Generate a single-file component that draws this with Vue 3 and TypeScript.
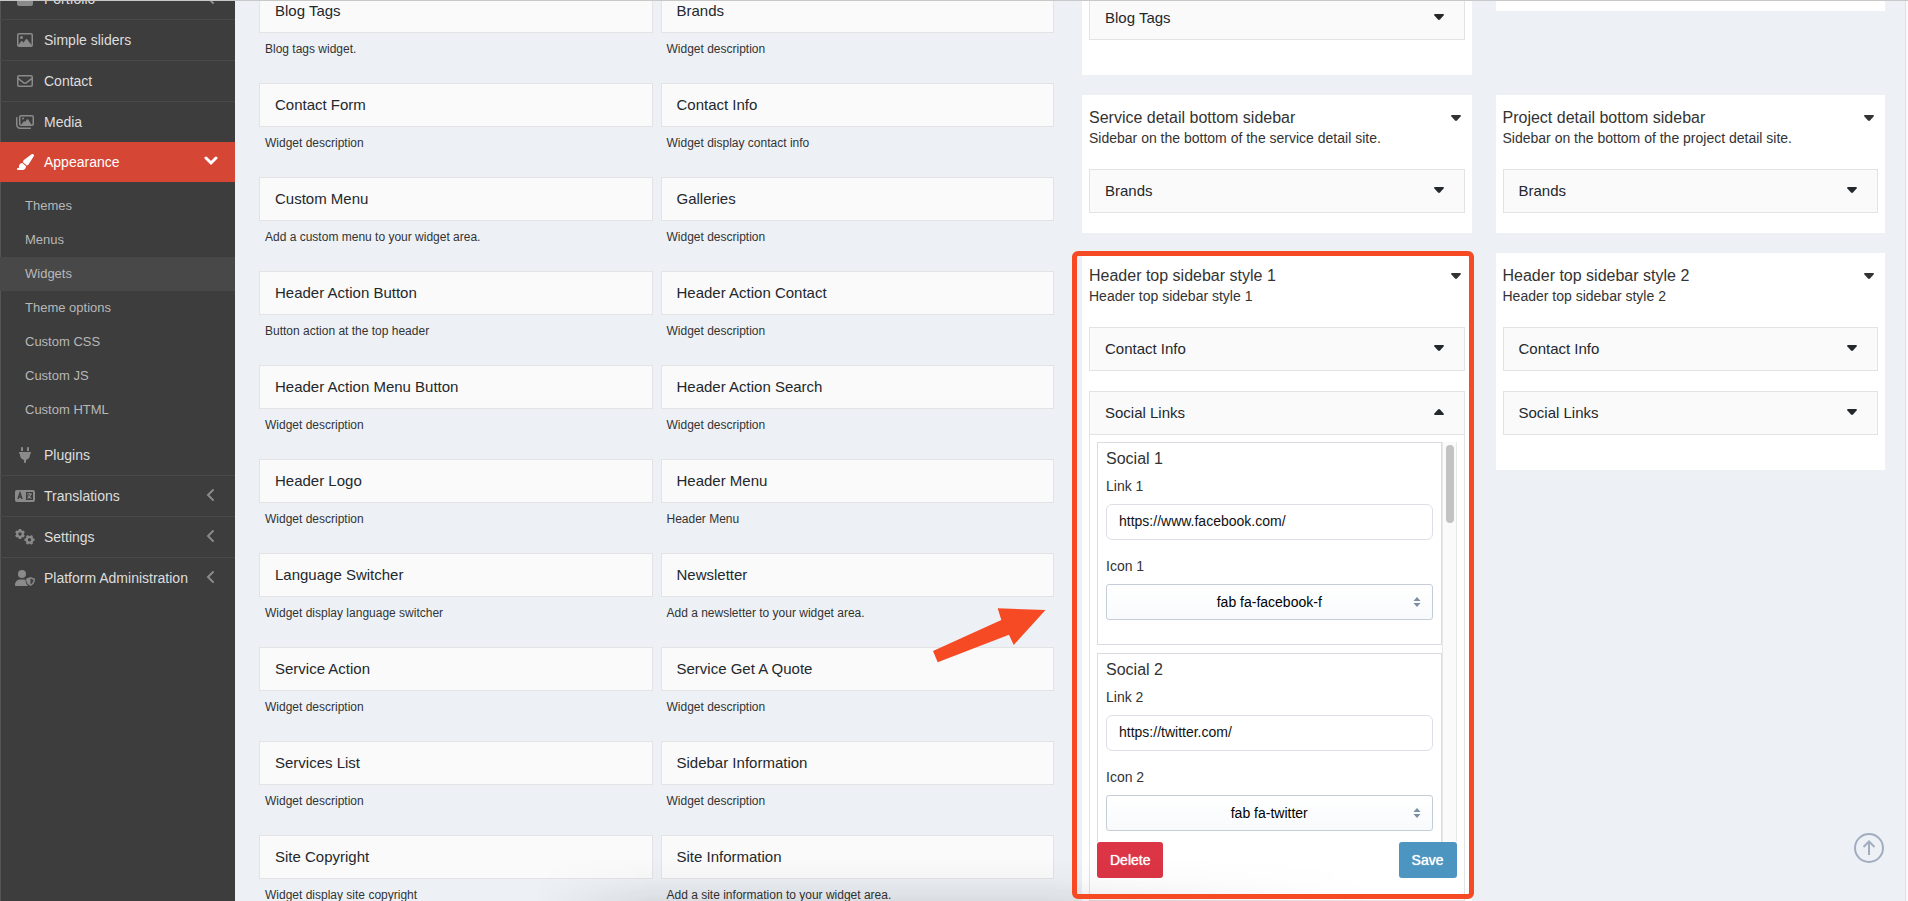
<script setup lang="ts">
import { ref } from 'vue'

interface Widget { name: string; desc: string }
interface MenuItem { label: string; icon: string; arrow?: boolean; plain?: boolean }
interface Social { id: number; link: string; icon: string }

const menuTop: MenuItem[] = [
  { label: 'Portfolio', icon: 'briefcase', arrow: true },
  { label: 'Simple sliders', icon: 'image' },
  { label: 'Contact', icon: 'envelope' },
  { label: 'Media', icon: 'images', plain: true },
]
const subMenu = ['Themes', 'Menus', 'Widgets', 'Theme options', 'Custom CSS', 'Custom JS', 'Custom HTML']
const menuBottom: MenuItem[] = [
  { label: 'Plugins', icon: 'plug' },
  { label: 'Translations', icon: 'language', arrow: true },
  { label: 'Settings', icon: 'gears', arrow: true },
  { label: 'Platform Administration', icon: 'shield', arrow: true, plain: true },
]

const d = 'Widget description'
const widgets: Widget[] = [
  { name: 'Blog Tags', desc: 'Blog tags widget.' },
  { name: 'Brands', desc: d },
  { name: 'Contact Form', desc: d },
  { name: 'Contact Info', desc: 'Widget display contact info' },
  { name: 'Custom Menu', desc: 'Add a custom menu to your widget area.' },
  { name: 'Galleries', desc: d },
  { name: 'Header Action Button', desc: 'Button action at the top header' },
  { name: 'Header Action Contact', desc: d },
  { name: 'Header Action Menu Button', desc: d },
  { name: 'Header Action Search', desc: d },
  { name: 'Header Logo', desc: d },
  { name: 'Header Menu', desc: 'Header Menu' },
  { name: 'Language Switcher', desc: 'Widget display language switcher' },
  { name: 'Newsletter', desc: 'Add a newsletter to your widget area.' },
  { name: 'Service Action', desc: d },
  { name: 'Service Get A Quote', desc: d },
  { name: 'Services List', desc: d },
  { name: 'Sidebar Information', desc: d },
  { name: 'Site Copyright', desc: 'Widget display site copyright' },
  { name: 'Site Information', desc: 'Add a site information to your widget area.' },
]

const socials = ref<Social[]>([
  { id: 1, link: 'https://www.facebook.com/', icon: 'fab fa-facebook-f' },
  { id: 2, link: 'https://twitter.com/', icon: 'fab fa-twitter' },
])
const iconChoices = ['fab fa-facebook-f', 'fab fa-twitter']
const open = ref(true)

const caret = 'M1 0h8q1.5.5.6 1.6L6 5.500q-1 .8-2 0L.4 1.600Q-.5.5 1 0z'

const shapes: Record<string, { box: string; w: number; path: string }> = {
  briefcase: { box: '0 0 512 512', w: 16, path: 'M64 96h96V64c0-18 14-32 32-32h128c18 0 32 14 32 32v32h96c35 0 64 29 64 64v256c0 35-29 64-64 64H64c-35 0-64-29-64-64V160c0-35 29-64 64-64z' },
  image: { box: '0 0 512 512', w: 16, path: 'M448 80c8.8 0 16 7.2 16 16V415.8l-5-6.5-136-176c-4.5-5.9-11.6-9.3-19-9.3s-14.4 3.4-19 9.3L202 340.7l-30.5-42.7C167 291.7 159.8 288 152 288s-15 3.7-19.5 10.1l-80 112L48 416.3l0-.3V96c0-8.8 7.2-16 16-16H448zM64 32C28.7 32 0 60.7 0 96V416c0 35.3 28.7 64 64 64H448c35.3 0 64-28.7 64-64V96c0-35.3-28.7-64-64-64H64zm80 192a48 48 0 1 0 0-96 48 48 0 1 0 0 96z' },
  envelope: { box: '0 0 512 512', w: 16, path: 'M64 112c-8.8 0-16 7.2-16 16v22.1L220.5 291.7c20.7 17 50.4 17 71.1 0L464 150.1V128c0-8.8-7.2-16-16-16H64zM48 212.2V384c0 8.8 7.2 16 16 16H448c8.8 0 16-7.2 16-16V212.2L322 328.8c-38.4 31.5-93.7 31.5-132 0L48 212.2zM0 128C0 92.7 28.7 64 64 64H448c35.3 0 64 28.7 64 64V384c0 35.3-28.7 64-64 64H64c-35.3 0-64-28.7-64-64V128z' },
  images: { box: '0 0 576 512', w: 18, path: 'M160 80H512c8.8 0 16 7.2 16 16V320c0 8.8-7.2 16-16 16H490.8L388.1 178.9c-4.4-6.8-12-10.9-20.1-10.9s-15.7 4.1-20.1 10.9l-52.2 79.8-12.4-16.9c-4.5-6.2-11.7-9.8-19.4-9.8s-14.8 3.6-19.4 9.8L175.6 336H160c-8.8 0-16-7.2-16-16V96c0-8.8 7.2-16 16-16zM96 96V320c0 35.3 28.7 64 64 64H512c35.3 0 64-28.7 64-64V96c0-35.3-28.7-64-64-64H160c-35.3 0-64 28.7-64 64zM48 120c0-13.3-10.7-24-24-24S0 106.7 0 120V344c0 75.1 60.9 136 136 136H456c13.3 0 24-10.7 24-24s-10.7-24-24-24H136c-48.6 0-88-39.4-88-88V120zm208 24a32 32 0 1 0 -64 0 32 32 0 1 0 64 0z' },
  brush: { box: '0 0 576 512', w: 18, path: 'M339.3 367.1c27.3-3.9 51.9-19.4 67.2-42.9L568.2 74.1c12.6-19.5 9.4-45.3-7.6-61.2S517.7-4.4 499.1 9.6L262.4 187.2c-24 18-38.2 46.1-38.4 76.1L339.3 367.1zm-19.6 25.4l-116-104.4C143.9 290.3 96 339.6 96 400c0 3.9 .2 7.8 .6 11.6C98.4 429.1 86.4 448 68.8 448H64c-17.7 0-32 14.3-32 32s14.3 32 32 32H208c61.9 0 112-50.1 112-112c0-2.5-.1-5-.2-7.5z' },
  plug: { box: '0 0 384 512', w: 12, path: 'M96 0C78.3 0 64 14.3 64 32v96h64V32c0-17.7-14.3-32-32-32zM288 0c-17.7 0-32 14.3-32 32v96h64V32c0-17.7-14.3-32-32-32zM32 160c-17.7 0-32 14.3-32 32s14.3 32 32 32v32c0 77.4 55 142 128 156.8V480c0 17.7 14.3 32 32 32s32-14.3 32-32V412.8C297 398 352 333.4 352 256V224c17.7 0 32-14.3 32-32s-14.3-32-32-32H32z' },
}
</script>

<template>
  <div class="screen">
    <nav class="sidebar" aria-label="Main menu">
      <div class="menu">
        <a v-for="m in menuTop" :key="m.label" href="#" class="row" :class="{ plain: m.plain }">
          <span class="ico"><svg :width="shapes[m.icon].w" height="16" :viewBox="shapes[m.icon].box" fill="currentColor"><path :d="shapes[m.icon].path" /></svg></span>
          <span class="label">{{ m.label }}</span>
          <svg v-if="m.arrow" class="arrow" width="9" height="14" viewBox="0 0 9 14"><path d="M7 2 2 7l5 5" fill="none" stroke="currentColor" stroke-width="2" stroke-linecap="round" /></svg>
        </a>
        <a href="#" class="row active">
          <span class="ico"><svg width="18" height="16" :viewBox="shapes.brush.box" fill="currentColor"><path :d="shapes.brush.path" /></svg></span>
          <span class="label">Appearance</span>
          <svg class="arrow" width="14" height="10" viewBox="0 0 14 10"><path d="M2 2l5 5 5-5" fill="none" stroke="currentColor" stroke-width="3" stroke-linecap="round" /></svg>
        </a>
        <div class="submenu">
          <a v-for="s in subMenu" :key="s" href="#" class="sub" :class="{ current: s === 'Widgets' }">{{ s }}</a>
        </div>
        <a v-for="m in menuBottom" :key="m.label" href="#" class="row" :class="{ plain: m.plain }">
          <span class="ico">
            <svg v-if="m.icon === 'language'" width="20" height="16" viewBox="0 0 20 16">
              <rect x="0" y="2" width="20" height="12" rx="2" fill="currentColor" />
              <path d="M11 4h7v8h-7z" fill="#3d3d3d" />
              <path d="M3 11 5 5l2 6M4 9h3" fill="none" stroke="#3d3d3d" stroke-width="1.4" />
              <path d="M12 6h5M14.5 5v1M16 6q-1 3-3.500 4.500M13 7.500q1 2 3.500 3" fill="none" stroke="currentColor" stroke-width="1.2" />
            </svg>
            <svg v-else-if="m.icon === 'gears'" width="20" height="16" viewBox="0 0 20 16" fill="none" stroke="currentColor">
              <circle cx="5" cy="5" r="2.8" stroke-width="2.2" />
              <path d="M5 0v2M5 8v2M.7 2.500l1.700 1M7.600 6.500l1.700 1M.7 7.500l1.700-1M7.600 3.500l1.700-1" stroke-width="2.4" />
              <circle cx="14.5" cy="10.8" r="2.8" stroke-width="2.2" />
              <path d="M9.5 10.8h2M17.5 10.8h2M12 6.500l1 1.700M16 13.400l1 1.700M17 6.500l-1 1.700M13 13.400l-1 1.700" stroke-width="2.4" />
            </svg>
            <svg v-else-if="m.icon === 'shield'" width="20" height="16" viewBox="0 0 20 16">
              <circle cx="7" cy="4" r="4" fill="currentColor" />
              <path d="M0 15c0-3.500 2.500-5.500 5.500-5.500h3c.7 0 1.400.1 2 .4.2 2.500 1.200 4.700 2.800 6.100H1c-.6 0-1-.4-1-1z" fill="currentColor" />
              <path d="M15.5 7 20 8.700c0 3.300-1.500 6-4.500 7.300-3-1.300-4.500-4-4.500-7.300z" fill="currentColor" />
              <path d="M15.5 8.600v5.800c1.900-1 2.900-2.600 3-4.700z" fill="#3d3d3d" />
            </svg>
            <svg v-else :width="shapes[m.icon].w" height="16" :viewBox="shapes[m.icon].box" fill="currentColor"><path :d="shapes[m.icon].path" /></svg>
          </span>
          <span class="label">{{ m.label }}</span>
          <svg v-if="m.arrow" class="arrow" width="9" height="14" viewBox="0 0 9 14"><path d="M7 2 2 7l5 5" fill="none" stroke="currentColor" stroke-width="2" stroke-linecap="round" /></svg>
        </a>
      </div>
    </nav>

    <main class="content">
      <div class="columns">
        <section class="available">
          <article v-for="w in widgets" :key="w.name">
            <h3 class="card">{{ w.name }}</h3>
            <p class="desc">{{ w.desc }}</p>
          </article>
        </section>

        <section class="areas">
          <div class="panel tall">
            <button class="item" type="button">Blog Tags<svg class="caret" viewBox="0 0 10 6"><path :d="caret" /></svg></button>
          </div>
          <div class="panel stub"></div>

          <div v-for="p in ['Service', 'Project']" :key="p" class="panel">
            <header class="head">
              <div>
                <h2>{{ p }} detail bottom sidebar</h2>
                <p>Sidebar on the bottom of the {{ p.toLowerCase() }} detail site.</p>
              </div>
              <button class="toggle" type="button" aria-label="Toggle area"><svg class="caret" viewBox="0 0 10 6"><path :d="caret" /></svg></button>
            </header>
            <button class="item" type="button">Brands<svg class="caret" viewBox="0 0 10 6"><path :d="caret" /></svg></button>
          </div>

          <div v-for="n in [1, 2]" :key="n" class="panel tall">
            <header class="head">
              <div>
                <h2>Header top sidebar style {{ n }}</h2>
                <p>Header top sidebar style {{ n }}</p>
              </div>
              <button class="toggle" type="button" aria-label="Toggle area"><svg class="caret" viewBox="0 0 10 6"><path :d="caret" /></svg></button>
            </header>
            <button class="item" type="button">Contact Info<svg class="caret" viewBox="0 0 10 6"><path :d="caret" /></svg></button>
            <button class="item" :class="{ opened: n === 1 && open }" type="button" @click="n === 1 && (open = !open)">Social Links<svg class="caret" viewBox="0 0 10 6"><path :d="caret" /></svg></button>
            <form v-if="n === 1 && open" class="editor" @submit.prevent>
              <div class="scroller">
                <div class="fields">
                  <fieldset v-for="s in socials" :key="s.id" class="social">
                    <h4>Social {{ s.id }}</h4>
                    <label :for="'link' + s.id">Link {{ s.id }}</label>
                    <input :id="'link' + s.id" v-model="s.link" type="text">
                    <label :for="'icon' + s.id">Icon {{ s.id }}</label>
                    <div class="pick">
                      <select :id="'icon' + s.id" v-model="s.icon">
                        <option v-for="c in iconChoices" :key="c">{{ c }}</option>
                      </select>
                      <svg class="updown" width="8" height="10" viewBox="0 0 8 10"><path d="M4 0l3.500 4h-7zM4 10 .5 6h7z" fill="#7c8ea3" /></svg>
                    </div>
                  </fieldset>
                </div>
                <div class="track"><div class="thumb"></div></div>
              </div>
              <div class="buttons">
                <button class="btn delete" type="button">Delete</button>
                <button class="btn save" type="submit">Save</button>
              </div>
            </form>
            <template v-if="n === 1">
              <div class="frame"></div>
              <svg class="pointer" width="113" height="55" viewBox="0 0 113 55"><path d="M0 43 68.300 12 64.700.3 112.500 2 80.700 37 76 26.700 4.700 54.300z" fill="#f64a24" /></svg>
            </template>
          </div>
        </section>
      </div>
      <div class="edge"></div>
    </main>

    <div class="shade"></div>
    <button class="to-top" type="button" aria-label="Back to top">
      <svg width="30" height="30" viewBox="0 0 30 30" fill="none" stroke="#a1adbf" stroke-width="2"><circle cx="15" cy="15" r="14" /><path d="M15 22V9M9.500 14 15 8.500l5.500 5.500" /></svg>
    </button>
  </div>
</template>

<style>
body { margin: 0; overflow: hidden; }
</style>

<style scoped>
.screen {
  position: relative;
  box-sizing: border-box;
  display: flex;
  height: 100vh;
  overflow: hidden;
  background: #edf1f6;
  color: #333;
  font: 14px/20px "Liberation Sans", Arial, Helvetica, sans-serif;
}
.screen::before {
  content: "";
  position: absolute;
  inset: 0 0 auto;
  height: 1px;
  background: #c8c8c8;
  z-index: 3;
}
.screen *, .screen *::before { box-sizing: border-box; }
h2, h3, h4, p { margin: 0; font-weight: 400; }
button, input, select { font: inherit; margin: 0; }

.sidebar { flex: 0 0 235px; background: #3d3d3d; overflow: hidden; box-shadow: inset 1px 0 #555; }
.menu { margin-top: -21px; }
.row {
  display: flex;
  align-items: center;
  height: 41px;
  padding: 0 20px 0 15px;
  border-bottom: 1px solid #494949;
  color: #8a8a8a;
  text-decoration: none;
}
.row.plain { height: 40px; border-bottom: 0; }
.row .label { flex: 1; margin-left: 9px; color: #ddd; }
.ico { display: flex; justify-content: center; width: 20px; }
.row svg { display: block; }
.row .arrow { margin-bottom: 3px; }
.row.active { height: 40px; border: 0; background: #d64635; color: #fff; padding-right: 17px; }
.row.active .label { color: #fff; }
.submenu { padding: 7px 0 8px; }
.sub {
  display: block;
  height: 34px;
  padding-left: 25px;
  font-size: 13px;
  line-height: 34px;
  color: #b8b8b8;
  text-decoration: none;
}
.sub.current { background: #484848; }

.content { flex: 1; display: flex; min-width: 0; overflow: hidden; }
.columns {
  flex: 1;
  display: grid;
  grid-template-columns: 795fr 803fr;
  align-items: start;
  gap: 28px;
  margin-top: -11px;
  padding: 0 20px 0 24px;
}
.edge { flex: 0 0 3px; background: #fafafa; border-left: 1px solid #e2e2e2; }
.available { display: grid; grid-template-columns: 1fr 1fr; column-gap: 8px; }
.card, .item {
  height: 44px;
  padding: 0 15px;
  border: 1px solid #e3e3e3;
  background: #fafafa;
  color: #23282d;
  font-size: 15px;
  line-height: 42px;
}
.desc { padding: 7px 6px 25px; font-size: 12px; line-height: 18px; }

.areas { display: grid; grid-template-columns: 1fr 1fr; align-items: start; gap: 20px 24px; }
.panel { position: relative; padding: 0 7px; background: #fff; }
.panel.tall { padding-bottom: 15px; }
.panel:first-child { padding-top: 7px; }
.panel.stub { height: 22px; }
.head { display: flex; justify-content: space-between; align-items: flex-start; height: 74px; padding: 13px 4px 0 0; }
.head h2 { font-size: 16px; line-height: 20px; }
.head p { font-size: 14px; line-height: 20px; }
.toggle { height: 20px; padding: 0; border: 0; background: none; color: #333; }
.caret { display: block; width: 10px; height: 6px; fill: currentColor; }
.item {
  display: flex;
  justify-content: space-between;
  align-items: center;
  width: 100%;
  margin-bottom: 20px;
  padding-right: 20px;
  text-align: left;
}
.item .caret { margin-bottom: 2px; }
.item.opened { margin-bottom: 0; }
.item.opened .caret { transform: rotate(180deg); }

.editor { padding: 7px 7px 22px; border: 1px solid #e3e3e3; border-top: 0; }
.scroller { display: flex; height: 400px; overflow: hidden; }
.fields { flex: 1; min-width: 0; }
.social { min-width: 0; margin: 0 0 8px; padding: 7px 8px 8px; border: 1px solid #d9dde3; }
.social h4 { margin-bottom: 8px; font-size: 16px; line-height: 18px; }
.social label { display: block; margin-bottom: 8px; }
.social input, .social select { display: block; width: 100%; height: 36px; margin-bottom: 16px; outline: 0; }
.social input { padding: 0 12px 2px; border: 1px solid #dcdfe8; border-radius: 6px; color: #111; background: #fff; }
.social select {
  appearance: none;
  padding: 0 12px;
  border: 1px solid #c4cdd8;
  border-radius: 3px;
  background: linear-gradient(#fff, #f8fafc);
  color: #000;
  text-align: center;
  text-align-last: center;
}
.pick { position: relative; }
.updown { position: absolute; top: 13px; right: 12px; }
.track { flex: 0 0 15px; padding: 3px 2px 0 3px; background: #fafafa; border: solid #e8e8e8; border-width: 0 1px; }
.thumb { width: 8px; height: 78px; border-radius: 4px; background: #c2c2c2; }
.buttons { display: flex; justify-content: space-between; }
.btn { height: 36px; padding: 0 13px; border: 0; border-radius: 3px; color: #fff; text-shadow: 0 0 1px #fff; }
.delete { background: #dc3545; }
.save { background: #4c95c1; }

.frame {
  position: absolute;
  top: -2px;
  left: -10px;
  right: -2px;
  height: 648px;
  border: 5px solid #f64a24;
  border-radius: 6px;
  pointer-events: none;
  z-index: 2;
}
.pointer { position: absolute; top: 355px; left: -149px; pointer-events: none; }
.shade {
  position: absolute;
  left: 28%;
  right: 28%;
  bottom: 0;
  height: 44px;
  background: linear-gradient(transparent, rgba(0, 0, 0, 0.02) 50%, rgba(0, 0, 0, 0.08));
  mask-image: linear-gradient(90deg, transparent, #000 14%, #000 60%, transparent);
  pointer-events: none;
}
.to-top { position: absolute; right: 24px; bottom: 38px; padding: 0; border: 0; background: none; }
.to-top svg { display: block; }
</style>
